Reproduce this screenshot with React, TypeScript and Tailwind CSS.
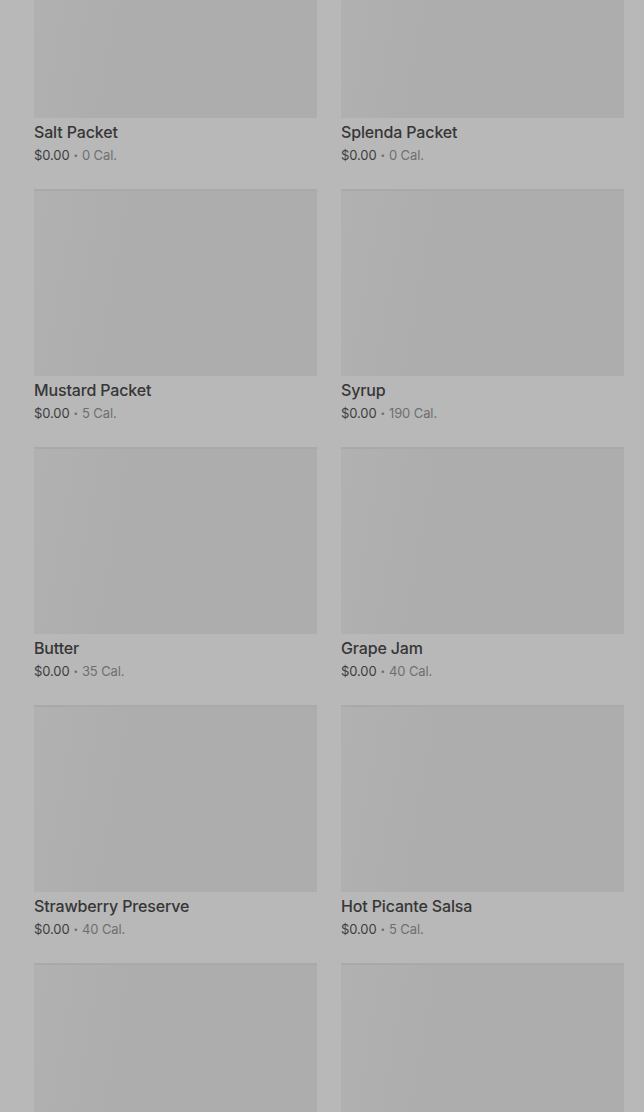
import React from "react";

const items: [string, string][] = [
  ["Salt Packet", "0 Cal."],
  ["Splenda Packet", "0 Cal."],
  ["Mustard Packet", "5 Cal."],
  ["Syrup", "190 Cal."],
  ["Butter", "35 Cal."],
  ["Grape Jam", "40 Cal."],
  ["Strawberry Preserve", "40 Cal."],
  ["Hot Picante Salsa", "5 Cal."],
  ["Honey", "50 Cal."],
  ["Ketchup Packet", "10 Cal."],
];

export default function App() {
  return (
    <div className="h-[1112px] w-[644px] overflow-hidden bg-[#b8b8b8] font-['Inter',sans-serif]">
      <div className="mt-[-69px] grid grid-cols-2 gap-x-[24px] pl-[34px] pr-[20px]">
        {items.map(([name, cal]) => (
          <div key={name} className="h-[258px]">
            <div className="h-[187px] w-full bg-[linear-gradient(100deg,#b1b1b1_0%,#afafaf_20%,#adadad_30%,#adadad_100%)] border-t-[2px] border-[#a9a9a9]" />
            <div className="mt-[4px] text-[16px] leading-[20px] font-medium text-[#363636] tracking-[-0.15px]">
              {name}
            </div>
            <div className="mt-[4px] flex items-center text-[13px] leading-[18px] text-[#3d3d3d] tracking-[-0.1px]">
              <span>$0.00</span>
              <span className="mx-[4px] text-[8px] text-[#6f6f6f]">•</span>
              <span className="text-[#6f6f6f]">{cal}</span>
            </div>
          </div>
        ))}
      </div>
    </div>
  );
}
